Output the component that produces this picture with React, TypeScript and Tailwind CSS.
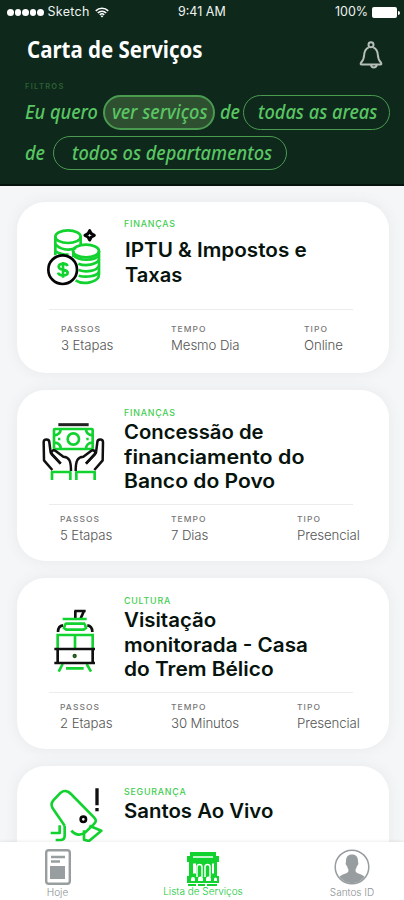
import type { ReactNode } from "react";

const GREEN = "#12d22f";

function CoinsIcon() {
  return (
    <svg viewBox="0 0 240 240" className="mt-[13px] ml-[18px] h-20 w-20" fill="none" stroke={GREEN} strokeWidth="8">
      <ellipse cx="99" cy="65" rx="38" ry="19" />
      <path d="M61 65v56M137 65v26M61 86c10 18 42 22 62 13M61 108c9 7 24 11 40 11" />
      <path d="M192 108v70c0 26-50 32-70 18M115 108v18" />
      <ellipse cx="153" cy="108" rx="39" ry="19" />
      <path d="M115 121c15 17 65 18 77 0M130 146c22 9 55 3 62-12M131 165c22 8 55 3 61-12M131 182c22 6 54 2 61-11" />
      <circle cx="83" cy="164" r="43" fill="#fff" stroke="#050505" />
      <path d="M98 153c-4-9-27-10-27 2 0 14 27 5 27 18 0 12-26 10-29 0M84 141v47" />
      <path d="M164 47l5 9 9 5-9 5-5 9-5-9-9-5 9-5z" fill="#fff" stroke="#050505" strokeWidth="9" strokeLinejoin="round" />
    </svg>
  );
}

function HandsIcon() {
  return (
    <svg viewBox="0 0 270 255" className="mt-[16px] ml-[13px] h-[85px] w-[90px]" fill="none" stroke="#101010" strokeWidth="7.5" strokeLinejoin="round">
      <path d="M85 56h91" stroke="#222" strokeWidth="9" />
      <g stroke={GREEN} strokeWidth="8">
        <rect x="72" y="69" width="116" height="60" rx="3" />
        <circle cx="130" cy="99" r="17" />
        <path d="M72 88c14-1 20-8 20-19M168 69c0 11 7 18 20 19M72 110c13 0 20 7 20 19M168 129c0-11 7-19 20-19M84 99h7M169 99h7" />
        <path d="M66 222v-24h55v24M139 222v-24h55v24" />
      </g>
      <path d="M67 192l-25-29-1-54c0-11 17-11 17 0l4 31 30 33" />
      <path d="M92 173l-26-27c-6-7 3-17 11-11l23 17c18 1 23 13 23 43" />
      <path d="M193 192l25-29 1-54c0-11-17-11-17 0l-4 31-30 33" />
      <path d="M168 173l26-27c6-7-3-17-11-11l-23 17c-18 1-23 13-23 43" />
    </svg>
  );
}

function TramIcon() {
  return (
    <svg viewBox="0 0 240 255" className="mt-[18px] ml-[18px] h-[85px] w-20" fill="none" stroke={GREEN} strokeWidth="8">
      <path d="M118 45h34M121 45v23M147 45l-10 22" stroke="#101010" />
      <path d="M83 69h72M91 83h59M91 83l-4 13 7 5h52l7-5-4-13" />
      <path d="M69 108c0-13 6-19 15-20M172 108c0-13-7-19-15-20" stroke="#101010" />
      <path d="M68 157v-40h105v40M120 117v40M83 204l-12 23M155 204l13 23M93 217h53" />
      <path d="M58 159h122M58 201h122M68 159v42M173 159v42" stroke="#101010" />
      <circle cx="119" cy="180" r="4" fill={GREEN} stroke="#23501d" strokeWidth="5" />
    </svg>
  );
}

function CameraIcon() {
  return (
    <svg viewBox="0 30 270 255" className="mt-[4px] ml-[13px] h-[85px] w-[90px]" fill="none" stroke={GREEN} strokeWidth="8" strokeLinejoin="round">
      <path d="M104 197L68 145c-5-9-4-17 2-24l22-23c10-8 22-6 31 4l69 70c8 9 7 13-1 21l-24 23c-14 13-32 9-43-4" />
      <path d="M178 197l36 15-37 31-15-4v-28M62 219h27v-23M77 240h14c9 0 13-5 13-13v-30" />
      <circle cx="160" cy="178" r="8" stroke="#050505" strokeWidth="8" />
      <path d="M201 85v51M201 144v10" stroke="#101010" strokeWidth="10" />
    </svg>
  );
}

function Stat({ label, value }: { label: string; value: string }) {
  return (
    <div className="whitespace-nowrap">
      <div className="h-[10px] origin-left scale-x-[1.06] text-[8px] leading-[10px] font-medium tracking-[1px] text-[#777]">{label}</div>
      <div className="mt-[2px] w-max origin-left scale-x-[0.98] text-[13.5px] leading-[18px] font-light tracking-[-0.1px] text-[#555]">{value}</div>
    </div>
  );
}

interface CardProps {
  icon: ReactNode;
  category: string;
  lines: { text: string; fit: string }[];
  stats?: string[];
  tall?: boolean;
}

function Card({ icon, category, lines, stats, tall = true }: CardProps) {
  const textPad = !stats ? "pt-[21px]" : tall ? "pt-[18px]" : "pt-[17px]";
  return (
    <article className="h-[171px] shrink-0 rounded-[28px] bg-white shadow-[0_0_14px_rgba(80,100,100,0.09)]">
      <div className={`flex ${tall ? "h-[114px]" : "h-[107px]"}`}>
        <div className="w-[107px] shrink-0">{icon}</div>
        <div className={textPad}>
          <div className="h-[11px] w-max origin-left scale-x-[1.04] text-[8.5px] leading-[11px] font-medium tracking-[0.75px] text-[#3fce50]">{category}</div>
          <h2 className={`${tall ? "mt-[1px]" : "mt-[8px] pl-[1px]"} text-[19.5px] leading-[24.7px] font-semibold whitespace-nowrap text-[#07130d]`}>
            {lines.map((l) => (
              <span key={l.text} className={`block w-max origin-left ${l.fit}`}>{l.text}</span>
            ))}
          </h2>
        </div>
      </div>
      {stats && (
        <>
          <div className="ml-8 h-px w-[304px] bg-[#ebecec]" />
          <div className={tall ? "grid grid-cols-[111px_126px_auto] pt-[9px] pl-[43px]" : "grid grid-cols-[110px_133px_auto] pt-[14px] pl-11"}>
            <Stat label="PASSOS" value={stats[0]} />
            <Stat label="TEMPO" value={stats[1]} />
            <Stat label="TIPO" value={stats[2]} />
          </div>
        </>
      )}
    </article>
  );
}

function StatusBar() {
  return (
    <div className="flex h-[25px] items-center pl-[7px] text-[12.5px] text-[#eef3f0]">
      <div className="flex w-[171px] items-center">
        <div className="flex gap-[1px]">
          {[0, 1, 2, 3, 4].map((i) => (
            <i key={i} className="h-[6.5px] w-[6.5px] rounded-full bg-white" />
          ))}
        </div>
        <span className="ml-[4px] tracking-[0.3px]">Sketch</span>
        <svg viewBox="0 0 15 12" className="ml-[5px] h-[11px] w-[14px]" fill="none" stroke="#fff" strokeWidth="1.7">
          <path d="M.7 4.2a9.7 9.7 0 0 1 13.6 0M2.9 6.5a6.5 6.5 0 0 1 9.2 0M5.1 8.6a3.4 3.4 0 0 1 4.8 0" />
          <path d="M7.5 9l1.4 1-1.4 1.5L6.1 10z" fill="#fff" stroke="none" />
        </svg>
      </div>
      <span className="w-[157px] whitespace-nowrap">9:41 AM</span>
      <span className="w-[37px]">100%</span>
      <span className="h-[11px] w-[25px] rounded-[2px] bg-white" />
      <span className="ml-px h-[4px] w-[2px] rounded-r bg-white" />
    </div>
  );
}

const phrase = "block w-max origin-left scale-x-[0.957]";
const pill = "flex items-center rounded-full border-[#4a9b50] whitespace-nowrap";

function Header() {
  return (
    <header className="h-[186px] shrink-0 border-b-2 border-[#04140c] bg-[#0e281c]">
      <StatusBar />
      <div className="flex h-[58px] justify-between pr-[21px] pl-[27px]">
        <h1 className="mt-[9px] h-[30px] w-max origin-left scale-x-[0.89] font-['Noto_Sans'] text-[23px] leading-[30px] font-bold whitespace-nowrap text-white">Carta de Serviços</h1>
        <svg viewBox="0 0 24 30" className="mt-[16px] h-[29px] w-6" fill="none" stroke="#b7bfba" strokeWidth="2" strokeLinejoin="round">
          <circle cx="12" cy="3.8" r="2.6" />
          <path d="M9.7 6.5C6.2 8 5.2 10.5 5 14c-.2 4-.8 6-3.4 8.5-.7 1.2-.3 1.8.7 1.8h19.4c1 0 1.4-.6.7-1.8C19.8 20 19.2 18 19 14c-.2-3.5-1.2-6-4.7-7.5M12 24.5c.3 4 5.500 4 6 0" />
        </svg>
      </div>
      <div className="ml-[25px] h-[8px] text-[7.5px] leading-[8px] font-semibold tracking-[1.3px] text-[#2c6132]">FILTROS</div>
      <div className="mt-[4px] flex items-center pl-[25px] font-['Noto_Sans'] text-[19px] font-medium text-[#5ac663] italic">
        <span className="w-[78px] whitespace-nowrap"><span className={phrase}>Eu quero</span></span>
        <span className={`${pill} h-[35px] w-[112px] border-2 bg-[#2f4f31] pl-[7px]`}><span className={phrase}>ver serviços</span></span>
        <span className="w-[28px] pl-[5px]"><span className={phrase}>de</span></span>
        <span className={`${pill} h-[35px] w-[147px] border-[1.5px] pl-[14px]`}><span className={phrase}>todas as areas</span></span>
      </div>
      <div className="mt-[6px] flex items-center pl-[25px] font-['Noto_Sans'] text-[19px] font-medium text-[#5ac663] italic">
        <span className="w-[28px]"><span className={phrase}>de</span></span>
        <span className={`${pill} h-[34px] w-[234px] border-[1.5px] pl-[18px]`}><span className={phrase}>todos os departamentos</span></span>
      </div>
    </header>
  );
}

function TabBar() {
  return (
    <nav className="flex h-[58px] shrink-0 bg-white text-[10px] leading-[12px] font-light shadow-[0_-1px_3px_rgba(0,0,0,0.07)]">
      <div className="flex w-[115px] flex-col items-center pt-[7px] text-[#8c9191]">
        <svg viewBox="0 0 26 36" className="h-9 w-[26px]" fill="none" stroke="#989e9f" strokeWidth="2.4">
          <rect x="1.2" y="1.2" width="23.6" height="33.6" rx="2.5" />
          <path d="M6 8h14M6 12.5h9" />
          <path d="M5 17h15v13H5z" fill="#989e9f" stroke="none" />
        </svg>
        <span className="mt-px">Hoje</span>
      </div>
      <div className="flex w-[176px] flex-col items-center pt-[9px] text-[#12c936]">
        <svg viewBox="0 0 34 36" className="h-9 w-[34px]" fill={GREEN}>
          <path d="M4 1h26v4h3v6h-2v14h2v7H1v-7h2V11H1V5h3z" />
          <path d="M7 6h20M11 26V16a2.500 2.500 0 0 1 5 0v10M19 26V16a2.500 2.500 0 0 1 5 0v10" fill="none" stroke="#fff" strokeWidth="1.5" />
          <path d="M5 30v-2a2 2 0 0 1 4 0v2zM12 30v-2a2.500 2.500 0 0 1 5 0v2zM20 30v-2a2.500 2.500 0 0 1 5 0v2zM28 30v-2a1.500 1.500 0 0 1 3 0v2zM7 12.500h3v10H7zM26 12.500h2v10h-2z" fill="#fff" />
          <path d="M2 33h8v2H2zM12 33h7v2h-7zM21 33h10v2H21z" />
        </svg>
        <span className="-mt-[2px] whitespace-nowrap">Lista de Serviços</span>
      </div>
      <div className="flex w-[113px] flex-col items-center pt-[7px] pl-[9px] text-[#8c9191]">
        <svg viewBox="0 0 36 36" className="h-9 w-9" fill="none" stroke="#989e9f">
          <circle cx="18" cy="18" r="16.8" strokeWidth="1.5" />
          <path d="M18 5.500c-4.300 0-6.200 3-6 7 0 1-.8 1.600 0 3.300.4 1 1 1 1.500 2.700.5 1.400 1 1.800 1 3.300 0 2.800-6.500 3.200-9 6a15.500 15.500 0 0 0 25 0c-2.500-2.800-9-3.200-9-6 0-1.500.5-1.900 1-3.300.5-1.700 1.100-1.700 1.500-2.700.8-1.700 0-2.300 0-3.300.2-4-1.700-7-6-7z" fill="#989e9f" stroke="none" />
        </svg>
        <span className="mt-px">Santos ID</span>
      </div>
    </nav>
  );
}

export default function App() {
  return (
    <div className="flex h-[900px] w-[404px] flex-col overflow-hidden bg-[#f5f6f7] font-['Inter',sans-serif]">
      <Header />
      <main className="flex min-h-0 flex-1 flex-col gap-[17px] overflow-hidden pt-[16px] pr-[15px] pl-[17px]">
        <Card tall={false} icon={<CoinsIcon />} category="FINANÇAS" lines={[{ text: "IPTU & Impostos e", fit: "scale-x-[1.06]" }, { text: "Taxas", fit: "scale-x-[1.03]" }]} stats={["3 Etapas", "Mesmo Dia", "Online"]} />
        <Card icon={<HandsIcon />} category="FINANÇAS" lines={[{ text: "Concessão de", fit: "scale-x-[1.04]" }, { text: "financiamento do", fit: "scale-x-[1.1]" }, { text: "Banco do Povo", fit: "scale-x-[1.08]" }]} stats={["5 Etapas", "7 Dias", "Presencial"]} />
        <Card icon={<TramIcon />} category="CULTURA" lines={[{ text: "Visitação", fit: "scale-x-[1.05]" }, { text: "monitorada - Casa", fit: "scale-x-[1.06]" }, { text: "do Trem Bélico", fit: "scale-x-[1.07]" }]} stats={["2 Etapas", "30 Minutos", "Presencial"]} />
        <Card icon={<CameraIcon />} category="SEGURANÇA" lines={[{ text: "Santos Ao Vivo", fit: "scale-x-[1.045]" }]} />
      </main>
      <TabBar />
    </div>
  );
}
